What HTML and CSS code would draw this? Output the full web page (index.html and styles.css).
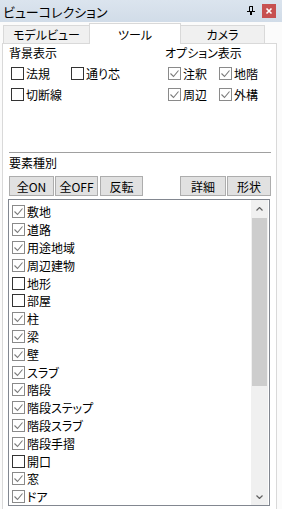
FILE: index.html
```html
<!DOCTYPE html>
<html lang="ja">
<head>
    <meta charset="UTF-8">
    <title>ビューコレクション</title>
    <link rel="stylesheet" href="styles.css">
</head>
<body>
    <!-- Title bar -->
    <div class="titlebar">
        <span class="title">ビューコレクション</span>
        <span class="pin">
            <svg width="8" height="10" viewBox="0 0 8 10"><path d="M2.5 0.5h3v5h-3z" fill="none" stroke="#000"/><rect x="5" y="0" width="1" height="6"/><rect x="0" y="5" width="8" height="1"/><rect x="3" y="6" width="2" height="3"/></svg>
        </span>
        <span class="close">
            <svg width="14" height="14" viewBox="0 0 14 14"><path d="M4.5 4.5l5 5M9.5 4.5l-5 5" stroke="#fff" stroke-width="1.6"/></svg>
        </span>
    </div>

    <!-- Tabs -->
    <div class="tabs">
        <div class="tab">モデルビュー</div>
        <div class="tab active">ツール</div>
        <div class="tab">カメラ</div>
    </div>

    <div class="panel">
        <div class="groups">
            <div class="group group-bg">
                <div class="group-title">背景表示</div>
                <div class="check-grid">
                    <label class="check"><span class="box"></span>法規</label>
                    <label class="check"><span class="box"></span>通り芯</label>
                    <label class="check"><span class="box"></span>切断線</label>
                </div>
            </div>
            <div class="group group-opt">
                <div class="group-title">オプション表示</div>
                <div class="check-grid">
                    <label class="check"><span class="box on"></span>注釈</label>
                    <label class="check"><span class="box on"></span>地階</label>
                    <label class="check"><span class="box on"></span>周辺</label>
                    <label class="check"><span class="box on"></span>外構</label>
                </div>
            </div>
        </div>

        <div class="divider"></div>

        <div class="section-title">要素種別</div>
        <div class="toolbar">
            <button class="btn btn-on">全ON</button>
            <button class="btn btn-off">全OFF</button>
            <button class="btn btn-inv">反転</button>
            <button class="btn btn-detail">詳細</button>
            <button class="btn btn-shape">形状</button>
        </div>

        <div class="list">
            <div class="items" id="items"></div>
            <div class="scrollbar">
                <div class="sb-btn">
                    <svg width="7" height="4" viewBox="0 0 7 4"><path d="M0.5 3.5l3-3 3 3" fill="none" stroke="#606060" stroke-width="1.2"/></svg>
                </div>
                <div class="sb-thumb"></div>
                <div class="sb-track"></div>
                <div class="sb-btn">
                    <svg width="7" height="4" viewBox="0 0 7 4"><path d="M0.5 0.5l3 3 3-3" fill="none" stroke="#606060" stroke-width="1.2"/></svg>
                </div>
            </div>
        </div>
    </div>

    <script>
        // Element type list
        const elements = [
            ['敷地', true], ['道路', true], ['用途地域', true], ['周辺建物', true],
            ['地形', false], ['部屋', false], ['柱', true], ['梁', true], ['壁', true],
            ['スラブ', true], ['階段', true], ['階段ステップ', true], ['階段スラブ', true],
            ['階段手摺', true], ['開口', false], ['窓', true], ['ドア', true]
        ];
        const items = document.getElementById('items');

        elements.forEach(([name, on]) => {
            const row = document.createElement('label');
            row.className = 'check item';
            row.innerHTML = `<span class="box${on ? ' on' : ''}"></span>${name}`;
            items.appendChild(row);
        });

        // Draw the tick into every checked box
        document.querySelectorAll('.box.on').forEach(box => {
            box.innerHTML = '<svg width="11" height="11" viewBox="0 0 11 11"><path d="M1.5 5.5l3 3 5-6" fill="none" stroke="#7a7a7a" stroke-width="1.1"/></svg>';
        });
    </script>
</body>
</html>
```

FILE: styles.css
```css
body {
    margin: 0;
    width: 282px;
    height: 509px;
    overflow: hidden;
    background-color: #fbfbfb;
    font-family: "Noto Sans CJK JP", sans-serif;
    font-size: 12px;
    color: #000;
    font-feature-settings: "palt";
}

.titlebar {
    height: 22px;
    display: flex;
    align-items: center;
    padding: 0 6px 0 3px;
    background: linear-gradient(#dbe4ee, #d1dce8);
}

.title {
    flex: 1;
    font-size: 13px;
}

.pin {
    display: flex;
    margin-right: 7px;
}

.close {
    display: flex;
    width: 14px;
    height: 14px;
    background-color: #c75050;
}

.tabs {
    display: flex;
    align-items: flex-end;
    height: 21px;
    padding-left: 3px;
}

.tab {
    box-sizing: border-box;
    height: 18px;
    display: flex;
    align-items: center;
    justify-content: center;
    background-color: #f0f0f0;
    border: 1px solid #d9d9d9;
    border-bottom: none;
}

.tab:first-child {
    width: 86px;
    border-right: none;
}

.tab:last-child {
    width: 84px;
    border-left: none;
}

.tab.active {
    width: 92px;
    height: 21px;
    margin-bottom: -1px;
    background-color: #fff;
    position: relative;
    z-index: 1;
}

.panel {
    box-sizing: border-box;
    width: 275px;
    height: 466px;
    margin-left: 2px;
    padding: 2px 5px 0 6px;
    background-color: #fff;
    border: 1px solid #d9d9d9;
    border-bottom: none;
}

.groups {
    display: flex;
}

.group-bg {
    width: 156px;
}

.group-title,
.section-title {
    height: 14px;
    line-height: 14px;
}

.check-grid {
    display: grid;
    grid-auto-rows: 21px;
    margin-top: 3px;
}

.group-bg .check-grid {
    grid-template-columns: 60px 60px;
    padding-left: 2px;
}

.group-opt .check-grid {
    grid-template-columns: 51px 51px;
    padding-left: 3px;
}

.check {
    display: flex;
    align-items: center;
    gap: 2px;
    white-space: nowrap;
}

.box {
    box-sizing: border-box;
    flex: none;
    width: 13px;
    height: 13px;
    display: flex;
    background-color: #fff;
    border: 1px solid #333;
}

.box.on {
    border-color: #8a8a8a;
}

.divider {
    margin-top: 47px;
    border-top: 1px solid #a0a0a0;
}

.section-title {
    margin-top: 3px;
}

.toolbar {
    display: flex;
    margin-top: 6px;
    height: 20px;
}

.btn {
    box-sizing: border-box;
    height: 20px;
    padding: 0;
    font: inherit;
    color: #000;
    background-color: #e1e1e1;
    border: 1px solid #adadad;
}

.btn-on { width: 45px; }
.btn-off { width: 43px; margin-left: 1px; }
.btn-inv { width: 43px; margin-left: 2px; }
.btn-detail { width: 46px; margin-left: auto; }
.btn-shape { width: 44px; margin-left: 1px; }

.list {
    box-sizing: border-box;
    display: flex;
    width: 262px;
    height: 307px;
    margin: 3px 0 0 -1px;
    background-color: #fff;
    border: 1px solid #828790;
}

.items {
    flex: 1;
    padding: 3px 0 0 3px;
}

.item {
    height: 17.8px;
}

.scrollbar {
    display: flex;
    flex-direction: column;
    width: 17px;
    margin-right: 1px;
    background-color: #f0f0f0;
}

.sb-btn {
    height: 17px;
    display: flex;
    align-items: center;
    justify-content: center;
}

.sb-thumb {
    height: 168px;
    margin: 1px 1px 0;
    background-color: #cdcdcd;
}

.sb-track {
    flex: 1;
}
```
